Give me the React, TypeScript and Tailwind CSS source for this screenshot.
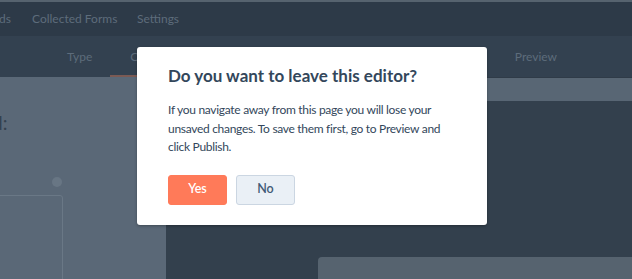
import React from 'react';

export default function App() {
  return (
    <div className="relative h-[279px] w-full overflow-hidden bg-[#33404d] font-['Lato',sans-serif]">
      {/* Top nav */}
      <div className="h-[2px] bg-[#56636f]" />
      <div className="flex h-[34px] items-center bg-[#2d3a48] text-[12px] text-[#5d6c7b]">
        <span className="-ml-[1px] w-[33px]">ds</span>
        <span className="w-[105px]">Collected Forms</span>
        <span>Settings</span>
      </div>

      {/* Editor tabs */}
      <div className="relative flex h-[41px] items-center bg-[#334150] text-[12px] text-[#5d6c7b]">
        <span className="ml-[67px]">Type</span>
        <span className="ml-[38px]">Create</span>
        <span className="ml-auto mr-[75px]">Preview</span>
        <div className="absolute bottom-0 left-[110px] h-[2px] w-[60px] bg-[#7b5a54]" />
      </div>

      {/* Content */}
      <div className="flex h-[202px]">
        <div className="relative w-[166px] overflow-hidden bg-[#5a6877]">
          <div className="-ml-[8px] pt-[36px] text-[19px] leading-none text-[#34414f]">d:</div>
          <div className="absolute left-[52px] top-[100px] h-[10px] w-[10px] rounded-full bg-[#687684]" />
          <div className="absolute left-[-2px] top-[118px] h-[100px] w-[65px] rounded-tr-[3px] border border-[#6a7886]" />
        </div>
        <div className="flex flex-1 flex-col">
          <div className="h-[24px] border-t border-[#2f3b48] bg-[#586674]" />
          <div className="flex-1" />
          <div className="ml-[152px] h-[22px] rounded-tl-[4px] bg-[#56636f]" />
        </div>
      </div>

      {/* Modal */}
      <div className="absolute left-[137px] top-[47px] h-[178px] w-[350px] rounded-[3px] bg-white px-[31px] pt-[16px] shadow-[0_1px_3px_rgba(0,0,0,0.3)]">
        <h2 className="text-[17px] font-bold leading-[26px] text-[#33475b]">
          Do you want to leave this editor?
        </h2>
        <p className="mt-[12px] max-w-[285px] text-[12px] leading-[18.5px] tracking-[-0.3px] text-[#33475b]">
          If you navigate away from this page you will lose your unsaved changes. To save them first, go to Preview and click Publish.
        </p>
        <div className="mt-[18px] flex gap-[9px]">
          <button className="h-[30px] w-[59px] rounded-[3px] border border-[#ff7a59] bg-[#ff7a59] text-[12.5px] font-semibold text-white">
            Yes
          </button>
          <button className="h-[30px] w-[59px] rounded-[3px] border border-[#cbd6e2] bg-[#eaf0f6] text-[12.5px] font-semibold text-[#425b76]">
            No
          </button>
        </div>
      </div>
    </div>
  );
}
